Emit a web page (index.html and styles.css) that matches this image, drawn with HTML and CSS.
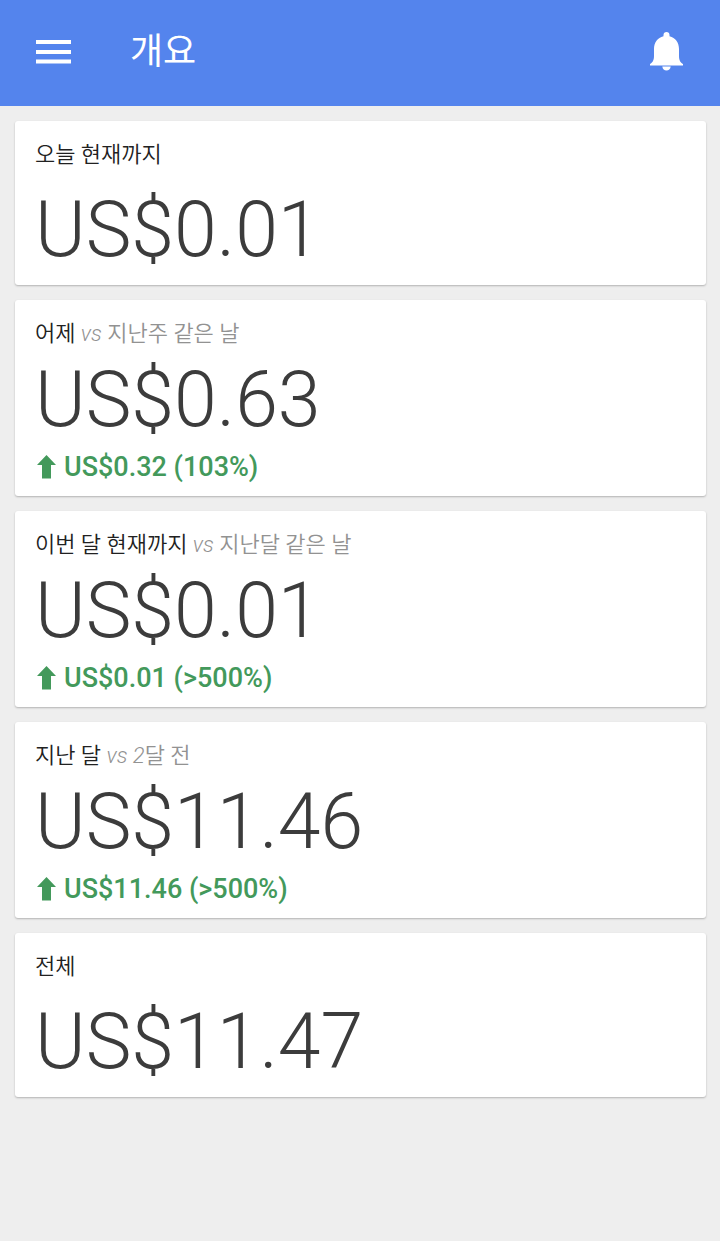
FILE: index.html
```html
<!DOCTYPE html>
<html lang="ko">
<head>
<meta charset="utf-8">
<meta name="viewport" content="width=device-width, initial-scale=1">
<title>개요</title>
<link rel="stylesheet" href="styles.css">
</head>
<body>
<header class="app-bar">
  <button class="icon-button" type="button" aria-label="메뉴">
    <svg class="menu-icon" viewBox="0 0 35 24" aria-hidden="true"><path d="M0 0h35v4H0zM0 10h35v4H0zM0 19.500h35v4H0z"/></svg>
  </button>
  <h1 class="title">개요</h1>
  <button class="icon-button" type="button" aria-label="알림">
    <svg class="bell-icon" viewBox="0 0 33 39" aria-hidden="true"><path d="M16.500 0C18.300 0 19.500 1.300 19.500 3v1.200C25.500 5.500 29 10.500 29 17v7c0 4.500 1.500 6.500 4 8v1.500H0V32c2.500-1.500 4-3.500 4-8v-7C4 10.500 7.500 5.500 13.500 4.200V3C13.500 1.300 14.700 0 16.500 0zM12.300 34.500h8.400c-.3 2.400-2 4-4.200 4s-3.900-1.600-4.200-4z"/></svg>
  </button>
</header>
<main class="cards">
  <section class="card card-simple">
    <h2 class="label">오늘 현재까지</h2>
    <p class="amount">US$0.01</p>
  </section>
  <section class="card">
    <h2 class="label">어제 <span class="compare"><i>vs</i> 지난주 같은 날</span></h2>
    <p class="amount">US$0.63</p>
    <p class="change"><svg class="arrow" viewBox="0 0 22 24" aria-hidden="true"><path d="M11.500 0 21 10h-5v13.500H7V10H2z"/></svg>US$0.32 (103%)</p>
  </section>
  <section class="card">
    <h2 class="label">이번 달 현재까지 <span class="compare"><i>vs</i> 지난달 같은 날</span></h2>
    <p class="amount">US$0.01</p>
    <p class="change"><svg class="arrow" viewBox="0 0 22 24" aria-hidden="true"><path d="M11.500 0 21 10h-5v13.500H7V10H2z"/></svg>US$0.01 (&gt;500%)</p>
  </section>
  <section class="card">
    <h2 class="label">지난 달 <span class="compare"><i>vs 2</i>달 전</span></h2>
    <p class="amount">US$11.46</p>
    <p class="change"><svg class="arrow" viewBox="0 0 22 24" aria-hidden="true"><path d="M11.500 0 21 10h-5v13.500H7V10H2z"/></svg>US$11.46 (&gt;500%)</p>
  </section>
  <section class="card card-simple">
    <h2 class="label">전체</h2>
    <p class="amount">US$11.47</p>
  </section>
</main>
</body>
</html>
```
FILE: styles.css
```css
* { box-sizing: border-box; }
body {
  margin: 0;
  min-height: 100vh;
  background: #eeeeee;
  color: #3c3c3c;
  font-family: Roboto, "Noto Sans CJK KR", sans-serif;
}
h1, h2, p { margin: 0; font-weight: 400; }
.app-bar {
  display: flex;
  align-items: center;
  height: 106px;
  padding: 0 37px 3px 36px;
  background: #5484ed;
  color: #ffffff;
}
.icon-button {
  display: flex;
  padding: 0;
  border: 0;
  background: none;
  color: inherit;
}
.icon-button svg { fill: currentColor; }
.menu-icon { width: 35px; height: 24px; }
.bell-icon { width: 33px; height: 39px; }
.title {
  flex: 1;
  margin-left: 59px;
  font-size: 36px;
  line-height: 50px;
}
.cards {
  display: flex;
  flex-direction: column;
  gap: 15px;
  padding: 15px 14px 15px 15px;
}
.card {
  padding: 19px 20px 12px;
  border-radius: 3px;
  background: #ffffff;
  box-shadow: 0 1px 2px rgba(0, 0, 0, 0.25);
}
.label {
  color: #212121;
  font-size: 22px;
  font-weight: 350;
  line-height: 30px;
}
.compare { color: #929292; }
.amount {
  margin: 6px 0 5px;
  font-size: 77px;
  font-weight: 300;
  line-height: 90px;
}
.card-simple .amount { margin: 15px 0 0; }
.card-simple { padding-bottom: 10px; }
.change {
  display: flex;
  align-items: center;
  gap: 7px;
  color: #43995b;
  font-size: 27px;
  font-weight: 500;
  line-height: 34px;
}
.arrow { width: 22px; height: 24px; fill: currentColor; }
```
